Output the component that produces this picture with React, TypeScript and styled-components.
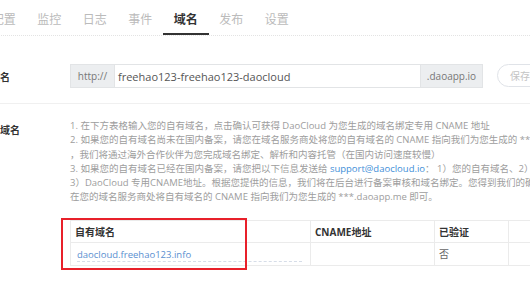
import React from 'react';
import styled, { createGlobalStyle } from 'styled-components';

const Global = createGlobalStyle`
  html, body { margin: 0; padding: 0; background: #fff; }
  body { font-family: "Open Sans", "Noto Sans CJK SC", sans-serif; overflow: hidden; }
  * { box-sizing: border-box; }
`;

const Viewport = styled.div`
  width: 530px;
  height: 300px;
  overflow: hidden;
  position: relative;
  background: #fff;
`;

const Canvas = styled.div`
  margin-left: -20px;
  width: 840px;
`;

const TabBar = styled.nav`
  display: flex;
  height: 36px;
  padding-left: 1px;
  border-bottom: 1px dotted #e3e3e3;
`;

const Tab = styled.div<{ $active?: boolean }>`
  width: 45.5px;
  height: 35px;
  padding-top: 3px;
  display: flex;
  align-items: center;
  justify-content: center;
  font-size: 12px;
  color: ${p => (p.$active ? '#333' : '#bbb')};
  font-weight: ${p => (p.$active ? 700 : 400)};
  box-shadow: ${p => (p.$active ? 'inset 0 -2px 0 #333' : 'none')};
  white-space: nowrap;
`;

const Row = styled.section<{ $divider?: boolean; $top: number }>`
  display: flex;
  padding-top: ${p => p.$top}px;
  padding-bottom: 15px;
  border-bottom: ${p => (p.$divider ? '1px solid #f0f0f0' : 'none')};
`;

const Label = styled.div<{ $pt: number }>`
  width: 90px;
  flex: none;
  padding-top: ${p => p.$pt}px;
  font-size: 10px;
  font-weight: 600;
  color: #333;
  white-space: nowrap;
`;

const InputGroup = styled.div`
  display: flex;
  align-items: stretch;
  height: 24px;
`;

const Addon = styled.span<{ $w: number }>`
  width: ${p => p.$w}px;
  display: flex;
  align-items: center;
  justify-content: center;
  background: #eceef0;
  border: 1px solid #e2e4e6;
  color: #777;
  font-size: 10px;
`;

const TextInput = styled.div`
  width: 305px;
  display: flex;
  align-items: center;
  padding-left: 3px;
  border-top: 1px solid #e2e4e6;
  border-bottom: 1px solid #e2e4e6;
  color: #555;
  font-size: 11px;
  white-space: nowrap;
`;

const SaveButton = styled.button`
  margin-left: 14px;
  height: 23px;
  padding: 0 12px;
  border: 1px solid #e0e3e8;
  border-radius: 12px;
  background: #fff;
  color: #c4c4c4;
  font-family: inherit;
  font-size: 10px;
  white-space: nowrap;
`;

const Content = styled.div`
  flex: 1;
`;

const Help = styled.div`
  font-size: 9.5px;
  line-height: 14.3px;
  color: #9d9d9d;
  white-space: nowrap;
`;

const Line = styled.div``;

const Link = styled.span`
  color: #3f8fd8;
`;

const Table = styled.div`
  margin-top: 15px;
  display: grid;
  grid-template-columns: 240px 124px 74px 160px;
  border-top: 1px solid #ebebeb;
  border-left: 1px solid #ebebeb;
  width: 598px;
`;

const Cell = styled.div<{ $head?: boolean; $pl?: number }>`
  height: ${p => (p.$head ? 22 : 23)}px;
  display: flex;
  align-items: center;
  padding-left: ${p => p.$pl ?? 4}px;
  border-right: 1px solid #ebebeb;
  border-bottom: 1px solid #ebebeb;
  font-size: 10px;
  color: ${p => (p.$head ? '#333' : '#666')};
  font-weight: ${p => (p.$head ? 700 : 400)};
  white-space: nowrap;
`;

const Editable = styled.span`
  flex: 1;
  margin-right: 8px;
  padding-top: 2px;
  color: #5a8fd0;
  font-size: 9.5px;
  border-bottom: 1px dashed #d6dde8;
`;

const Highlight = styled.div`
  position: absolute;
  left: 61px;
  top: 218px;
  width: 186px;
  height: 52px;
  border: 2px solid #e8202a;
  pointer-events: none;
`;

const tabs = ['配置', '监控', '日志', '事件', '域名', '发布', '设置'];

export default function App() {
  return (
    <Viewport>
      <Global />
      <Canvas>
        <TabBar>
          {tabs.map(t => (
            <Tab key={t} $active={t === '域名'}>{t}</Tab>
          ))}
        </TabBar>
        <Row $divider $top={28}>
          <Label $pt={5}>子域名</Label>
          <InputGroup>
            <Addon $w={45}>http://</Addon>
            <TextInput>freehao123-freehao123-daocloud</TextInput>
            <Addon $w={63}>.daoapp.io</Addon>
          </InputGroup>
          <SaveButton>保存设置</SaveButton>
        </Row>
        <Row $top={15}>
          <Label $pt={3}>自有域名</Label>
          <Content>
            <Help>
              <Line>1. 在下方表格输入您的自有域名，点击确认可获得 DaoCloud 为您生成的域名绑定专用 CNAME 地址</Line>
              <Line>2. 如果您的自有域名尚未在国内备案，请您在域名服务商处将您的自有域名的 CNAME 指向我们为您生成的 ***.daoapp.me</Line>
              <Line>，我们将通过海外合作伙伴为您完成域名绑定、解析和内容托管（在国内访问速度较慢）</Line>
              <Line>3. 如果您的自有域名已经在国内备案，请您把以下信息发送给 <Link>support@daocloud.io</Link>： 1）您的自有域名、2）您的备案号</Line>
              <Line>3）DaoCloud 专用CNAME地址。根据您提供的信息，我们将在后台进行备案审核和域名绑定。您得到我们的确认后，</Line>
              <Line>在您的域名服务商处将自有域名的 CNAME 指向我们为您生成的 ***.daoapp.me 即可。</Line>
            </Help>
            <Table>
              <Cell $head>自有域名</Cell>
              <Cell $head>CNAME地址</Cell>
              <Cell $head>已验证</Cell>
              <Cell $head></Cell>
              <Cell $pl={6}><Editable>daocloud.freehao123.info</Editable></Cell>
              <Cell></Cell>
              <Cell>否</Cell>
              <Cell></Cell>
            </Table>
          </Content>
        </Row>
      </Canvas>
      <Highlight />
    </Viewport>
  );
}
